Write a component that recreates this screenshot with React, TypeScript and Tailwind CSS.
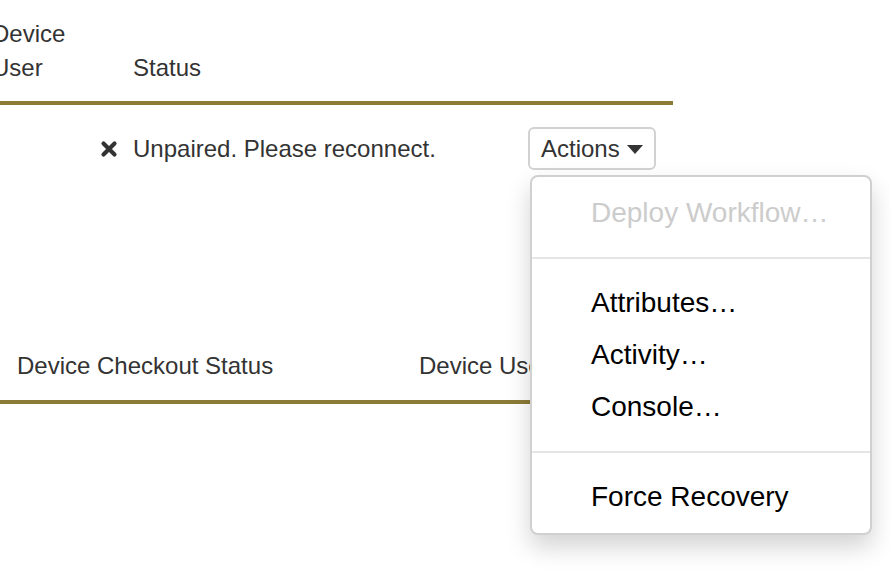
import React from "react";

const menuItems = ["Attributes…", "Activity…", "Console…"];

const RemoveIcon = () => (
    <svg width="18" height="18" viewBox="0 0 18 18" className="shrink-0">
        <path
            d="M3.5 3.5 L14.5 14.5 M14.5 3.5 L3.5 14.5"
            stroke="#333"
            strokeWidth="4.2"
            strokeLinecap="round"
        />
    </svg>
);

const Caret = () => (
    <svg width="16" height="9" viewBox="0 0 16 9" className="ml-[7px] mt-[2px]">
        <path d="M0 0 L16 0 L8 9 Z" fill="#333" />
    </svg>
);

const App = () => {
    return (
        <div
            className="relative w-[890px] h-[584px] overflow-hidden bg-white text-[#333] text-[24px] leading-[34px] pt-[16px]"
            style={{ fontFamily: '"Liberation Sans", Arial, sans-serif' }}
        >
            {/* device table */}
            <div className="w-[673px]">
                <div className="flex items-end pt-px pb-4 border-b-4 border-[#8c7a37]">
                    <div className="w-[141px] -ml-2">
                        Device
                        <br />
                        User
                    </div>
                    <div>Status</div>
                </div>
                <div className="flex items-center h-[43px] mt-[22px]">
                    <div className="w-[100px]" />
                    <RemoveIcon />
                    <span className="ml-[15px] w-[395px]">
                        Unpaired. Please reconnect.
                    </span>
                    <button className="flex items-center h-[43px] px-[11px] border-2 border-[#d2d2d2] rounded-[6px] text-[#333]">
                        Actions
                        <Caret />
                    </button>
                </div>
            </div>

            {/* checkout table */}
            <div className="w-[673px] mt-[163px]">
                <div className="flex pt-4 pb-[17px] border-b-4 border-[#8c7a37]">
                    <div className="w-[419px] pl-[17px]">Device Checkout Status</div>
                    <div>Device User</div>
                </div>
            </div>

            {/* actions dropdown */}
            <div className="absolute left-[530px] top-[175px] w-[342px] py-[10px] bg-white border-2 border-[#d0d0d0] rounded-[8px] shadow-[0_12px_24px_rgba(0,0,0,0.175)] text-[28px] leading-[52px] text-black">
                <div className="pl-[59px] text-[#cccccc]">Deploy Workflow…</div>
                <div className="h-[2px] my-[18px] bg-[#e5e5e5]" />
                {menuItems.map((item) => (
                    <div key={item} className="pl-[59px]">
                        {item}
                    </div>
                ))}
                <div className="h-[2px] my-[18px] bg-[#e5e5e5]" />
                <div className="pl-[59px]">Force Recovery</div>
            </div>
        </div>
    );
};

export default App;
